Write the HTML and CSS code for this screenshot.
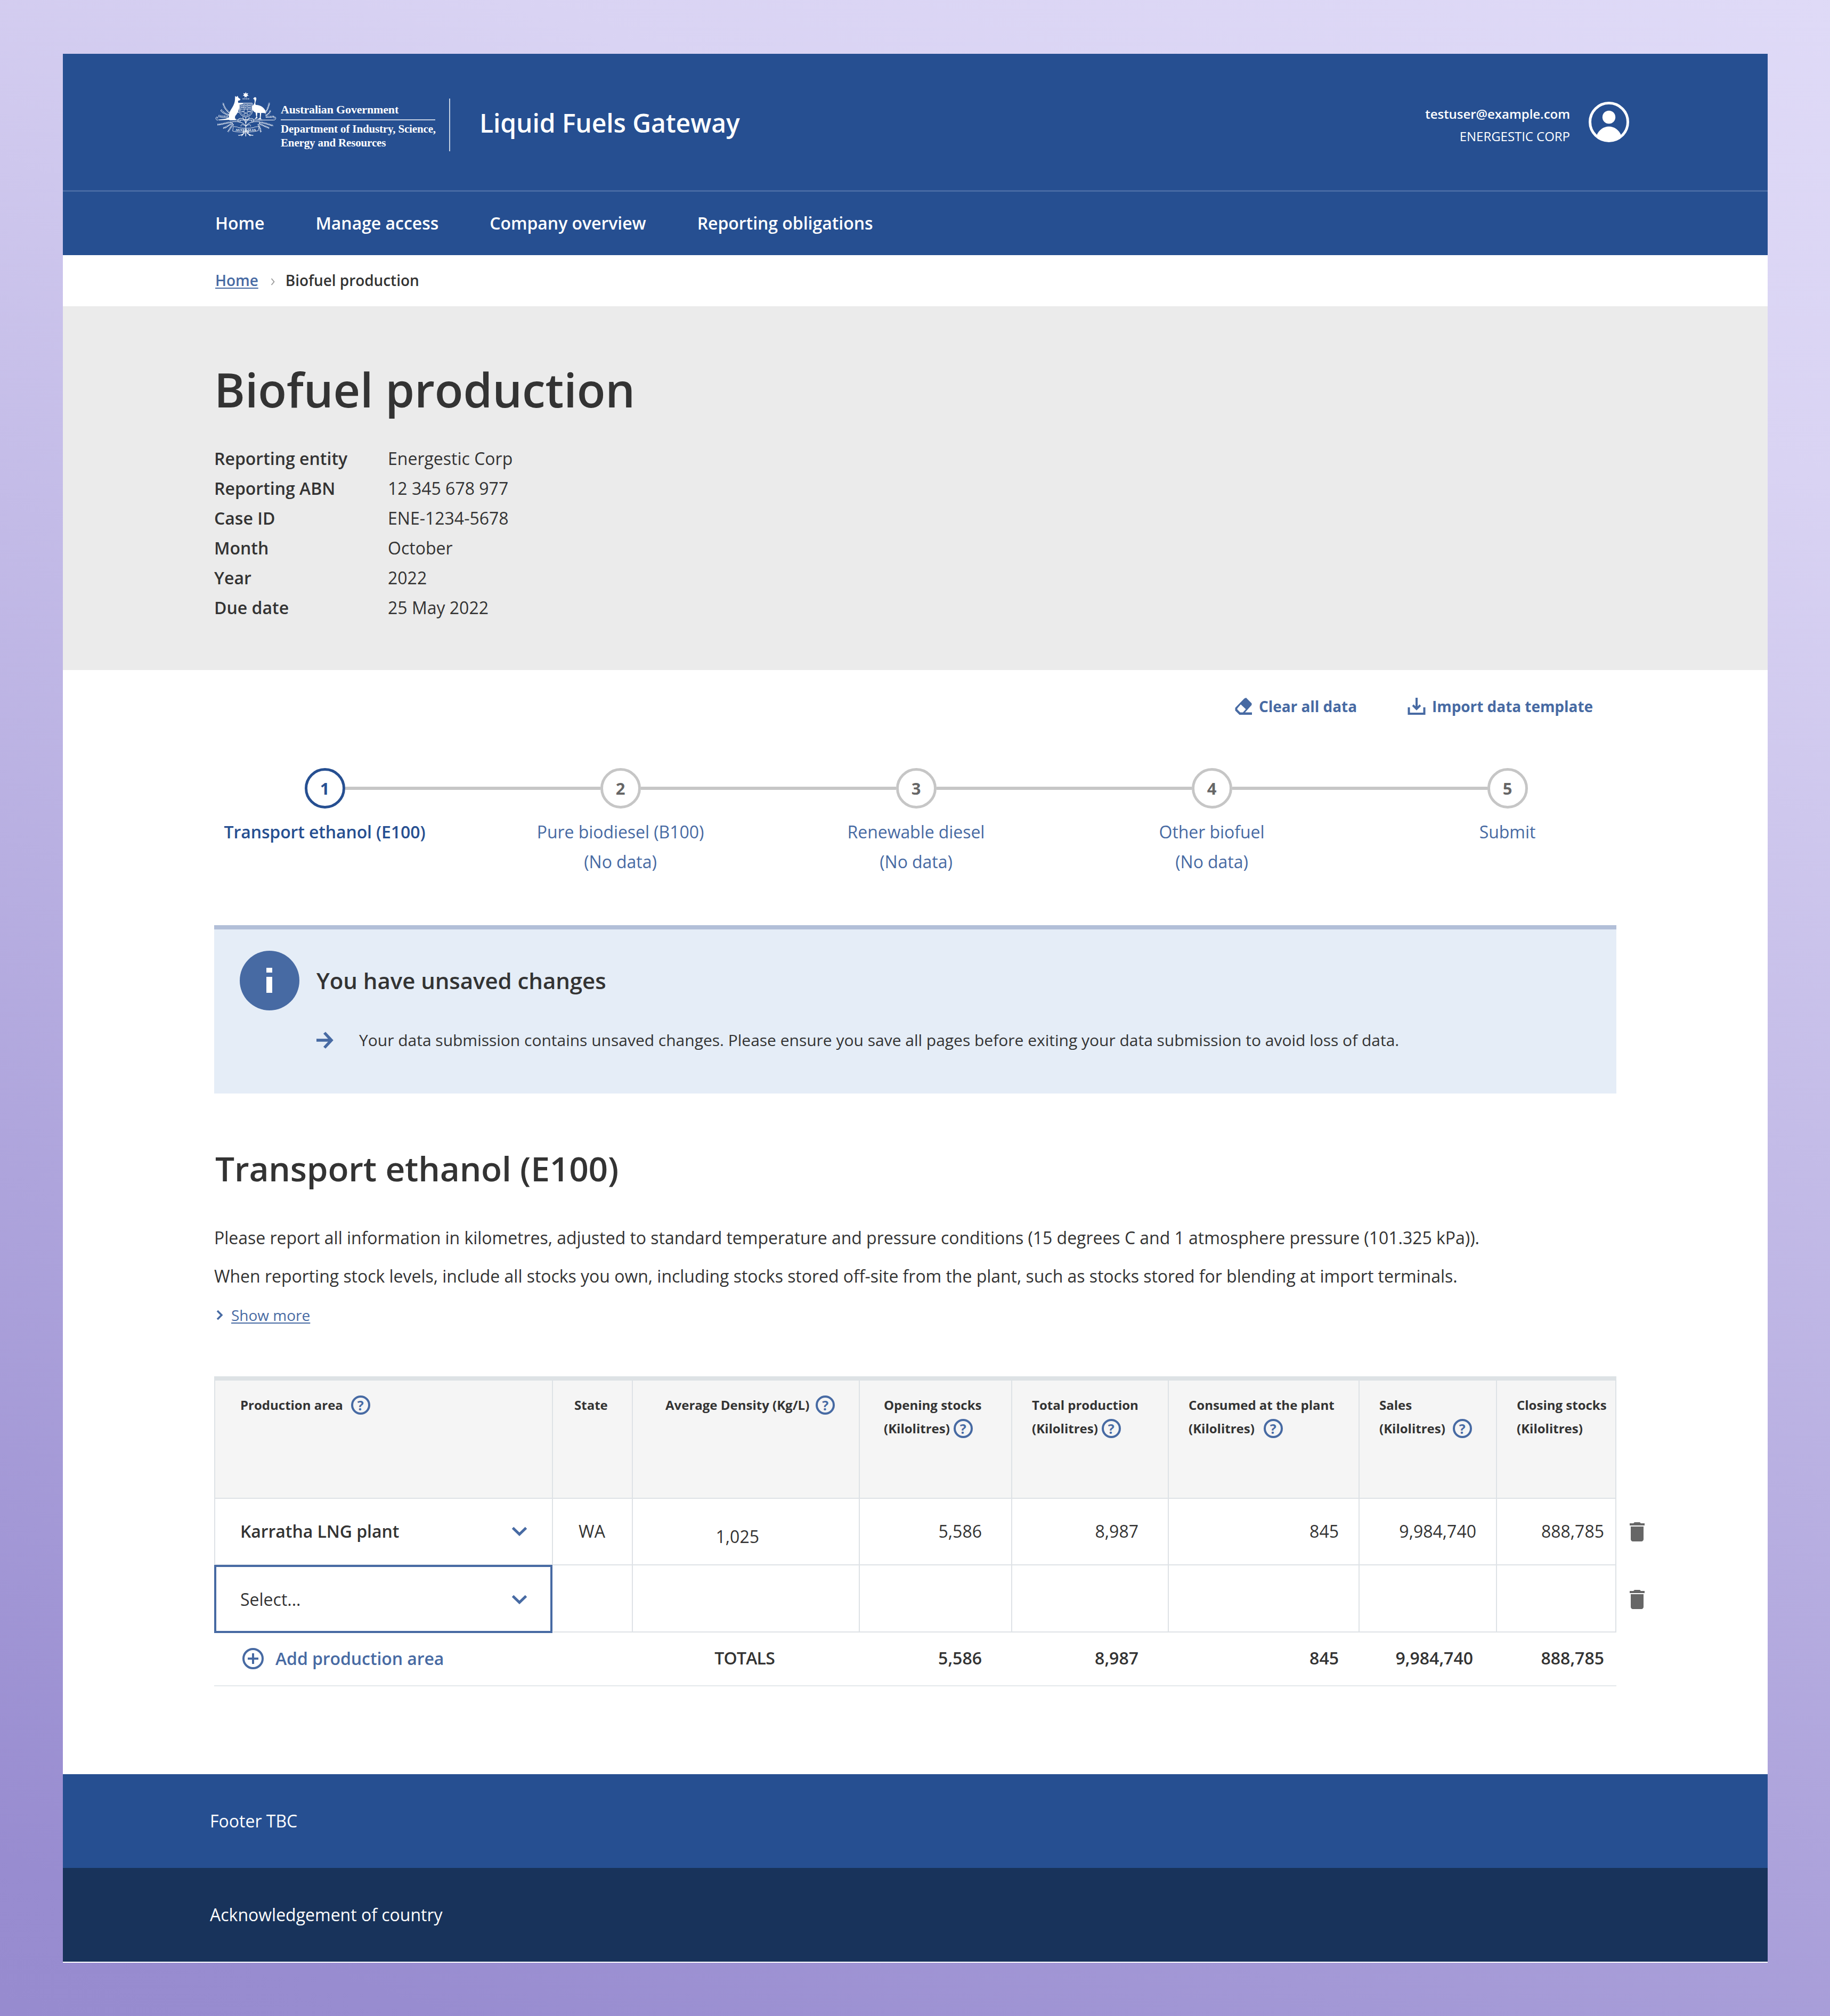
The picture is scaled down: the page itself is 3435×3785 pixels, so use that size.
FILE: index.html
```html
<!DOCTYPE html>
<html lang="en">
<head>
<meta charset="utf-8">
<title>Biofuel production</title>
<link rel="stylesheet" href="styles.css">
</head>
<body>
<svg class="defs" aria-hidden="true">
  <symbol id="chevron" viewBox="0 0 30 18"><path d="M2.5 2.5 15 14.5 27.5 2.5" fill="none" stroke="currentColor" stroke-width="5"/></symbol>
  <symbol id="trash" viewBox="0 0 24 24"><path fill="currentColor" d="M6 19c0 1.100.9 2 2 2h8c1.100 0 2-.9 2-2V7H6v12zM19 4h-3.500l-1-1h-5l-1 1H5v2h14V4z"/></symbol>
</svg>
<div class="page">
  <header class="header">
    <div class="header-top">
      <svg class="crest" viewBox="70 66 345 258" fill="none" stroke="#fff">
        <path fill="#fff" stroke="none" d="M242 68l4 9 10-3-5 9 7 7-10 1-1 10-5-7-6 7-1-10-9-2 6-6-4-9 10 3z"/>
        <path stroke-width="4" stroke-dasharray="7 3" d="M224 107h37"/>
        <path fill="#fff" stroke="none" d="M182 91l8 5 6-7 4 11 12 9-3 6-11 3 2 12 20-1 8 5-8 4-15 1c2 14 0 26-6 38l6 8-9-1c-4 8-9 14-14 21l-1 12 9 5-8 3h-35l-56 2-6-3 44-6 18-7c-2-22 8-38 18-54 9-15 15-29 16-44z"/>
        <path fill="#fff" stroke="none" d="M283 108l6-9c9-5 15 2 12 12-4 12-8 24-2 30 22-1 50 14 56 40l-4 6-22-1-3 28 4 7h-22l13-7 1-27-15-2-2 24 4 6-19 7 11-13-4-25c-15-7-22-19-20-35 13-11 19-25 12-40z"/>
        <path stroke-width="3" d="M207 131h71v48c0 17-15 24-36 31-20-7-35-14-35-31z"/>
        <path stroke-width="2" d="M213 137h59v40c0 13-12 20-30 26-17-6-29-12-29-26zM233 137v62M251 137v62M213 166h59"/>
        <path stroke-width="7" stroke-dasharray="5 3" d="M218 146h12M218 156h12M237 146h12M237 157h10M255 145h14M255 157h14M219 178h12M237 187h11M255 178h14"/>
        <path stroke-width="3" d="M150 226h92c-30-16-48-9-44 5 5 11 18 3 12-4M335 226h-92c30-16 48-9 44 5-5 11-18 3-12-4M85 226c-15 2-14-18-4-17 6 1 4 9-1 7M300 226h98c15 2 17-18 6-17-6 1-4 9 1 7M242 210v80M225 208c2 15 12 20 17 36M262 208c-3 15-14 20-20 36M242 262c-10-22-40-30-75-26M242 262c10-22 45-30 76-26M242 262c-18-18-32-8-26 0M242 262c18-18 32-8 26 0"/>
        <path stroke-width="2" d="M152 190c-18-16-30-32-38-60M150 200c-22-8-38-10-50-26M140 212c-18-2-40 2-52-6M350 190c12-16 18-32 26-60M352 200c16-8 24-12 30-30M355 212c18-2 34 2 48-8M165 240c-30 2-50 10-82 12M170 245c-25 8-40 28-55 26M175 250c-20 14-25 30-35 42M318 240c30 2 50 14 78 18M315 245c20 8 40 20 60 28M308 250c14 14 14 30 18 46"/>
        <path stroke-width="10" stroke-dasharray="3 5" d="M148 184c-18-16-28-30-34-54M145 196c-22-8-30-12-44-30M140 205c-18 0-34 2-52-4M350 188c10-16 20-32 24-60M356 200c14-8 20-12 24-28M355 208c18-2 34 2 46-4M165 238c-30 0-50 12-82 14M168 246c-25 8-40 26-53 24M172 252c-16 14-21 28-30 40M318 238c30 2 50 12 78 20M318 247c20 8 36 16 56 24M312 252c12 14 12 30 16 44"/>
        <path stroke-width="2.500" d="M172 262l-4 26c28 9 110 9 144-2l5-24c-14 4-24 0-30 6-26 6-62 6-88 0-6-6-17-2-27-6z"/>
        <path stroke-width="4" d="M242 292c-14-10-24 4-8 6l-16 18M242 292c14-10 24 4 8 6l18 18M200 312c12 2 22-4 34-12M284 312c-12 2-22-4-34-12M242 296v22"/>
        <text class="crest-motto" x="184" y="287" textLength="116" stroke="none" fill="#fff">AUSTRALIA</text>
      </svg>
      <div class="dept">
        <div class="dept-gov">Australian Government</div>
        <div class="dept-name">Department of Industry, Science,<br>Energy and Resources</div>
      </div>
      <div class="brand">Liquid Fuels Gateway</div>
      <div class="user">
        <div class="user-text">
          <div class="user-mail">testuser@example.com</div>
          <div class="user-org">ENERGESTIC CORP</div>
        </div>
        <svg class="avatar" viewBox="0 0 76 76">
          <circle cx="38" cy="38" r="35.500" fill="none" stroke="#fff" stroke-width="5"/>
          <circle cx="38" cy="29" r="12.200" fill="#fff"/>
          <path d="M15 63C19 53 28 46.500 38 46.500S57 53 61 63A33 33 0 0 1 15 63z" fill="#fff"/>
        </svg>
      </div>
    </div>
    <nav class="nav">
      <a>Home</a><a>Manage access</a><a>Company overview</a><a>Reporting obligations</a>
    </nav>
  </header>

  <div class="crumbs">
    <a class="crumb-link">Home</a>
    <svg class="crumb-sep" viewBox="0 0 8 14"><path d="M1.500 1 6.500 7 1.500 13" fill="none" stroke="#999" stroke-width="1.800"/></svg>
    <span>Biofuel production</span>
  </div>

  <section class="intro">
    <h1 class="title">Biofuel production</h1>
    <dl class="facts">
      <dt>Reporting entity</dt><dd>Energestic Corp</dd>
      <dt>Reporting ABN</dt><dd>12 345 678 977</dd>
      <dt>Case ID</dt><dd>ENE-1234-5678</dd>
      <dt>Month</dt><dd>October</dd>
      <dt>Year</dt><dd>2022</dd>
      <dt>Due date</dt><dd>25 May 2022</dd>
    </dl>
  </section>

  <main class="main">
    <div class="actions">
      <a class="action">
        <svg viewBox="0 0 34 34"><path d="M18.500 2.500 22 1l10.500 10.500v3L20 28.500h13V33H9.500L1.500 25v-5z" fill="currentColor"/><path d="M12 13.500 21.500 22.500 16 28.500H11L5.500 23v-2z" fill="#fff"/></svg>
        <span>Clear all data</span>
      </a>
      <a class="action">
        <svg viewBox="0 0 34 34"><path d="M2.500 19V31h29V19M17 1v20M10 15l7 7 7-7" fill="none" stroke="currentColor" stroke-width="4"/></svg>
        <span>Import data template</span>
      </a>
    </div>

    <ol class="steps">
      <li class="step step-on"><div class="step-track"><span class="step-dot">1</span></div><div>Transport ethanol (E100)</div></li>
      <li class="step"><div class="step-track"><span class="step-dot">2</span></div><div>Pure biodiesel (B100)<br>(No data)</div></li>
      <li class="step"><div class="step-track"><span class="step-dot">3</span></div><div>Renewable diesel<br>(No data)</div></li>
      <li class="step"><div class="step-track"><span class="step-dot">4</span></div><div>Other biofuel<br>(No data)</div></li>
      <li class="step"><div class="step-track"><span class="step-dot">5</span></div><div>Submit</div></li>
    </ol>

    <section class="alert">
      <div class="alert-head">
        <svg class="alert-icon" viewBox="0 0 112 112"><circle cx="56" cy="56" r="56" fill="#476aa3"/><path d="M50 32h11v9H50zM50 49h11v30H50z" fill="#fff"/></svg>
        <h2>You have unsaved changes</h2>
      </div>
      <div class="alert-item">
        <svg viewBox="0 0 32 32"><path d="M0 16h28M15 2l13 14-13 14" fill="none" stroke="#476aa3" stroke-width="5.500"/></svg>
        <span>Your data submission contains unsaved changes. Please ensure you save all pages before exiting your data submission to avoid loss of data.</span>
      </div>
    </section>

    <h2 class="section-title">Transport ethanol (E100)</h2>
    <p class="para">Please report all information in kilometres, adjusted to standard temperature and pressure conditions (15 degrees C and 1 atmosphere pressure (101.325 kPa)).</p>
    <p class="para">When reporting stock levels, include all stocks you own, including stocks stored off-site from the plant, such as stocks stored for blending at import terminals.</p>
    <a class="more">
      <svg viewBox="0 0 12 20"><path d="M2 2l8 8-8 8" fill="none" stroke="currentColor" stroke-width="3.600"/></svg>
      <span class="more-text">Show more</span>
    </a>

    <div class="table">
      <div class="row row-head">
        <div class="cell c-area"><div class="line">Production area<i class="help h-16">?</i></div></div>
        <div class="cell c-state">State</div>
        <div class="cell c-dens"><div class="line">Average Density (Kg/L)<i class="help h-12">?</i></div></div>
        <div class="cell c-open">Opening stocks<div class="line">(Kilolitres)<i class="help h-7">?</i></div></div>
        <div class="cell c-total">Total production<div class="line">(Kilolitres)<i class="help h-7">?</i></div></div>
        <div class="cell c-cons">Consumed at the plant<div class="line">(Kilolitres)<i class="help h-17">?</i></div></div>
        <div class="cell c-sales">Sales<div class="line">(Kilolitres)<i class="help h-14">?</i></div></div>
        <div class="cell c-close">Closing stocks<div class="line">(Kilolitres)</div></div>
      </div>
      <div class="row row-data">
        <div class="cell c-area pick"><b>Karratha LNG plant</b><svg class="chev"><use href="#chevron"/></svg></div>
        <div class="cell c-mid">WA</div>
        <div class="cell c-num-dens">1,025</div>
        <div class="cell n-open">5,586</div>
        <div class="cell n-total">8,987</div>
        <div class="cell n-cons">845</div>
        <div class="cell n-sales">9,984,740</div>
        <div class="cell n-close">888,785</div>
        <div class="bin"><svg><use href="#trash"/></svg></div>
      </div>
      <div class="row row-new">
        <div class="pick pick-focus"><span>Select...</span><svg class="chev"><use href="#chevron"/></svg></div>
        <div class="cell"></div><div class="cell"></div><div class="cell"></div><div class="cell"></div><div class="cell"></div><div class="cell"></div><div class="cell"></div>
        <div class="bin"><svg><use href="#trash"/></svg></div>
      </div>
      <div class="row row-sum">
        <div class="sum-add">
          <svg viewBox="0 0 40 40"><circle cx="20" cy="20" r="18" fill="none" stroke="currentColor" stroke-width="4"/><path d="M10 20h20M20 10v20" stroke="currentColor" stroke-width="4"/></svg>
          <span>Add production area</span>
        </div>
        <div></div>
        <div class="sum-label">TOTALS</div>
        <div class="n-open">5,586</div>
        <div class="n-total">8,987</div>
        <div class="n-cons">845</div>
        <div class="n-sum-sales">9,984,740</div>
        <div class="n-close">888,785</div>
      </div>
    </div>
  </main>

  <footer class="footer">
    <div class="foot">Footer TBC</div>
    <div class="foot foot-dark">Acknowledgement of country</div>
  </footer>
</div>
</body>
</html>
```
FILE: styles.css
```css
* { box-sizing: border-box; }

body {
  margin: 0;
  width: 3435px;
  height: 3785px;
  padding: 101px 117px 0 118px;
  background: linear-gradient(200deg, #dfdaf7 0%, #d9d3f3 18%, #988cd0 94%, #978bcf 100%);
  font-family: "Open Sans", sans-serif;
  font-size: 32px;
  line-height: 56px;
  color: #333;
}

h1, h2, p, dl, dd, ol { margin: 0; padding: 0; }

.defs { display: none; }

.page {
  display: flex;
  flex-direction: column;
  width: 3200px;
  height: 3584px;
  background: #fff;
}

/* Header */
.header { background: #264f91; color: #fff; }

.header-top {
  display: flex;
  align-items: flex-start;
  height: 259px;
  padding: 0 260px 0 286px;
  border-bottom: 3px solid #476aa3;
}

.crest { width: 115px; height: 86px; margin-top: 71px; }
.crest-motto { font: bold 20px "Liberation Serif", serif; }

.dept {
  width: 318px;
  margin: 84px 0 0 8px;
  padding-right: 26px;
  height: 99px;
  border-right: 2px solid #c3cfe1;
  font: bold 21px/26px "Liberation Serif", serif;
  letter-spacing: -0.15px;
  white-space: nowrap;
}
.dept-gov { height: 41px; padding-top: 8px; border-bottom: 2px solid #c3cfe1; font-size: 22px; }
.dept-name { padding-top: 3px; }

.brand { margin: 98px 0 0 55px; font-size: 48px; line-height: 64px; font-weight: 600; letter-spacing: -0.1px; }

.user { display: flex; gap: 35px; margin: 90px 0 0 auto; }
.user-text { padding-top: 2px; text-align: right; font-size: 24px; line-height: 42px; letter-spacing: -0.04px; }
.user-mail { font-weight: 600; }
.avatar { width: 76px; height: 76px; }

.nav {
  display: flex;
  gap: 96px;
  align-items: center;
  height: 119px;
  padding: 0 286px 2px;
  font-weight: 600;
  letter-spacing: -0.04px;
}

/* Breadcrumbs */
.crumbs {
  display: flex;
  align-items: center;
  height: 96px;
  padding: 0 286px 2px;
  font-size: 28px;
  font-weight: 600;
  letter-spacing: -0.06px;
}
.crumb-link { color: #476aa3; text-decoration: underline; text-decoration-thickness: 2px; text-underline-offset: 3px; }
.crumb-sep { width: 8px; height: 14px; margin: 6px 20px 0 23px; }

/* Title block */
.intro { height: 683px; padding: 100px 284px 0; background: #ebebeb; }
.title { font-size: 88px; line-height: 112px; font-weight: 600; letter-spacing: -0.1px; }
.facts { display: grid; grid-template-columns: 326px auto; margin-top: 46px; }
.facts dt { font-weight: 600; }

.main { flex: 1; padding: 48px 284px 0; }

.actions {
  display: flex;
  justify-content: flex-end;
  gap: 95px;
  height: 40px;
  padding-right: 44px;
  color: #476aa3;
  font-size: 28px;
  font-weight: 700;
  line-height: 40px;
  letter-spacing: -0.05px;
}
.action { display: flex; align-items: center; gap: 12px; }
.action svg { width: 34px; height: 34px; }

/* Stepper */
.steps {
  display: grid;
  grid-template-columns: repeat(5, 555px);
  margin: 96px -69px 0 -70px;
  list-style: none;
  text-align: center;
  color: #476aa3;
  letter-spacing: -0.06px;
}
.step-on { color: #264f91; font-weight: 600; letter-spacing: -0.12px; }
.step-track { display: flex; align-items: center; margin-bottom: 16px; }
.step-track::before, .step-track::after { content: ""; flex: 1; height: 6px; background: #c6c6c6; }
.step:first-child .step-track::before, .step:last-child .step-track::after { background: none; }
.step-dot {
  width: 76px;
  height: 76px;
  border: 5px solid #c6c6c6;
  border-radius: 50%;
  font-size: 31px;
  line-height: 66px;
  font-weight: 700;
  color: #666;
}
.step-on .step-dot { border-color: #264f91; color: #264f91; }

/* Notice */
.alert {
  height: 316px;
  margin-top: 91px;
  padding: 40px 48px;
  border-top: 8px solid #b2bfd8;
  background: #e5edf7;
}
.alert-head { display: flex; align-items: center; gap: 32px; }
.alert-head h2 { font-size: 42px; font-weight: 600; letter-spacing: -0.06px; }
.alert-icon { width: 112px; height: 112px; }
.alert-item { display: flex; align-items: center; gap: 48px; margin: 28px 0 0 144px; font-size: 30px; letter-spacing: -0.01px; }
.alert-item svg { width: 32px; height: 32px; }

.section-title { margin: 101px 0 62px 2px; font-size: 64px; line-height: 80px; font-weight: 600; letter-spacing: -0.18px; }
.para { margin-bottom: 16px; white-space: nowrap; letter-spacing: -0.03px; }

.more { display: flex; align-items: center; gap: 16px; margin-top: 21px; padding-left: 4px; font-size: 28px; line-height: 48px; color: #476aa3; }
.more svg { width: 12px; height: 20px; }
.more-text { text-decoration: underline; text-decoration-thickness: 2px; text-underline-offset: 3px; }

/* Table */
.table { margin-top: 91px; border-top: 8px solid #dde2e5; }
.row { display: grid; grid-template-columns: 636px 150px 426px 286px 294px 358px 258px 224px 80px; grid-template-rows: 100%; }
.cell { border-right: 2px solid #dee2e6; border-bottom: 2px solid #dee2e6; }
.c-area { border-left: 2px solid #dee2e6; padding-left: 47px; }

.row-head { height: 222px; font-size: 24px; font-weight: 700; line-height: 44px; white-space: nowrap; }
.row-head .cell { padding-top: 24px; background: #f5f5f5; }
.line { display: flex; align-items: center; }
.c-state { padding-left: 40px; }
.c-dens { padding-left: 61px; }
.c-open { padding-left: 45px; }
.c-total, .c-close, .c-cons, .c-sales { padding-left: 37px; }

.help {
  width: 36px;
  height: 36px;
  border: 4px solid #476aa3;
  border-radius: 50%;
  color: #476aa3;
  font-size: 25px;
  font-style: normal;
  line-height: 28px;
  text-align: center;
}
.h-7 { margin-left: 7px; }
.h-12 { margin-left: 12px; }
.h-14 { margin-left: 14px; }
.h-16 { margin-left: 15px; }
.h-17 { margin-left: 17px; }

.row-data { height: 125px; line-height: 122px; text-align: right; }
.row-new { height: 126px; }
.pick { display: flex; align-items: center; justify-content: space-between; padding-right: 46px; padding-bottom: 1px; }
.pick b { font-weight: 600; letter-spacing: -0.06px; }
.chev { width: 30px; height: 18px; color: #476aa3; }
.pick-focus { position: relative; width: 635px; height: 128px; margin-top: -1px; padding: 1px 43px 0 45px; border: 4px solid #476aa3; }

.c-mid { padding-right: 2px; text-align: center; }
.c-num-dens { padding: 10px 187px 0 0; }
.n-open { padding-right: 55px; }
.n-total { padding-right: 55px; }
.n-cons { padding-right: 37px; }
.n-sales { padding-right: 37px; }
.n-close { padding-right: 21px; }
.bin { display: flex; align-items: center; padding: 0 0 2px 15px; color: #666; }
.row-new .bin { padding: 2px 0 0 15px; }
.bin svg { width: 48px; height: 48px; }

.row-sum { width: 2632px; height: 101px; border-bottom: 2px solid #e4e8eb; line-height: 96px; text-align: right; font-weight: 600; }
.row-sum > div { margin-right: 2px; }
.sum-add { display: flex; align-items: center; gap: 22px; padding: 0 0 2px 53px; color: #476aa3; letter-spacing: -0.08px; }
.sum-add svg { width: 40px; height: 40px; }
.row-sum > .sum-label { padding-right: 158px; letter-spacing: -0.8px; }
.n-sum-sales { padding-right: 43px; }

/* Footer */
.footer { margin-bottom: 2px; }
.foot { height: 176px; padding: 0 276px; background: #264f91; color: #fff; line-height: 176px; }
.foot-dark { background: #18335b; }
```
